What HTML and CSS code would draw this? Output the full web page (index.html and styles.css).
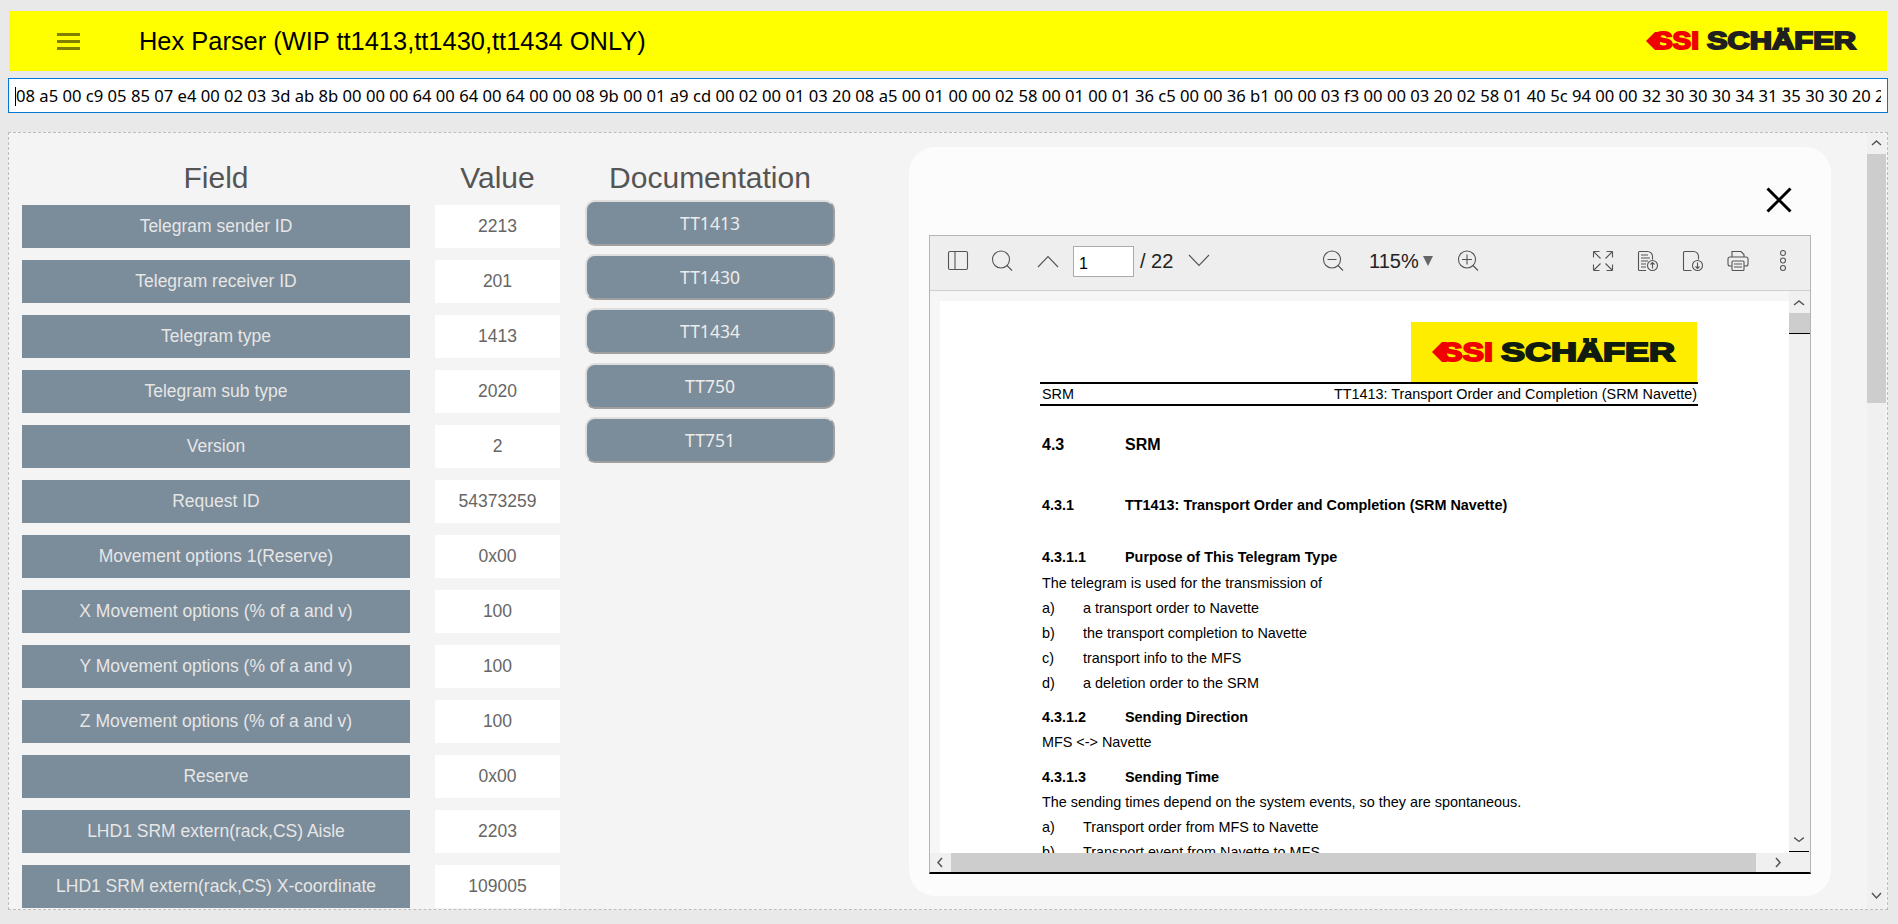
FILE: index.html
```html
<!DOCTYPE html>
<html lang="en">
<head>
<meta charset="utf-8">
<title>Hex Parser</title>
<link rel="stylesheet" href="styles.css">
</head>
<body>
<header class="topbar">
  <button class="menu" aria-label="Menu"><span></span><span></span><span></span></button>
  <h1 class="app-title">Hex Parser (WIP tt1413,tt1430,tt1434 ONLY)</h1>
  <svg class="logo logo-top" viewBox="0 0 211 18" aria-label="SSI Schäfer">
    <polygon class="logo-red" points="0,9 9,0 14,0 14,18 9,18"/>
    <text class="logo-ssi" x="8" y="17" textLength="45" lengthAdjust="spacingAndGlyphs" font-size="23">SSI</text>
    <text class="logo-name" x="61" y="17" textLength="149" lengthAdjust="spacingAndGlyphs" font-size="23">SCHÄFER</text>
  </svg>
</header>

<div class="hex-input"><div class="hex-text"><span class="caret"></span>08 a5 00 c9 05 85 07 e4 00 02 03 3d ab 8b 00 00 00 64 00 64 00 64 00 00 08 9b 00 01 a9 cd 00 02 00 01 03 20 08 a5 00 01 00 00 02 58 00 01 00 01 36 c5 00 00 36 b1 00 00 03 f3 00 00 03 20 02 58 01 40 5c 94 00 00 32 30 30 30 34 31 35 30 30 20 20</div></div>

<main class="workspace">
  <div class="content">
    <section class="col col-field">
      <h2 class="col-head">Field</h2>
      <div class="field">Telegram sender ID</div>
      <div class="field">Telegram receiver ID</div>
      <div class="field">Telegram type</div>
      <div class="field">Telegram sub type</div>
      <div class="field">Version</div>
      <div class="field">Request ID</div>
      <div class="field">Movement options 1(Reserve)</div>
      <div class="field">X Movement options (% of a and v)</div>
      <div class="field">Y Movement options (% of a and v)</div>
      <div class="field">Z Movement options (% of a and v)</div>
      <div class="field">Reserve</div>
      <div class="field">LHD1 SRM extern(rack,CS) Aisle</div>
      <div class="field">LHD1 SRM extern(rack,CS) X-coordinate</div>
    </section>
    <section class="col col-value">
      <h2 class="col-head">Value</h2>
      <div class="value">2213</div>
      <div class="value">201</div>
      <div class="value">1413</div>
      <div class="value">2020</div>
      <div class="value">2</div>
      <div class="value">54373259</div>
      <div class="value">0x00</div>
      <div class="value">100</div>
      <div class="value">100</div>
      <div class="value">100</div>
      <div class="value">0x00</div>
      <div class="value">2203</div>
      <div class="value">109005</div>
    </section>
    <section class="col col-doc">
      <h2 class="col-head col-head-doc">Documentation</h2>
      <button class="doc-btn">TT1413</button>
      <button class="doc-btn">TT1430</button>
      <button class="doc-btn">TT1434</button>
      <button class="doc-btn">TT750</button>
      <button class="doc-btn">TT751</button>
    </section>

    <section class="modal">
      <div class="modal-close" aria-label="Close">
        <svg width="26" height="26" viewBox="0 0 26 26"><path class="close-x" d="M1.500 1.500 24.500 24.500M24.500 1.500 1.500 24.500"/></svg>
      </div>
      <div class="viewer">
        <div class="toolbar">
          <svg class="ti" viewBox="0 0 22 22"><rect x="1.500" y="1.500" width="19" height="18" rx="1.500"/><path d="M8 1.500v18"/></svg>
          <svg class="ti gap-22" viewBox="0 0 22 22"><circle cx="10" cy="9.500" r="8.500"/><path d="M16 15.500l5 5"/></svg>
          <svg class="ti gap-24" viewBox="0 0 22 22"><path d="M1 17 11 6.500 21 17"/></svg>
          <div class="page-box">1</div>
          <span class="tb-text page-total">/ 22</span>
          <svg class="ti gap-14" viewBox="0 0 22 22"><path d="M1 5 11 15.500 21 5"/></svg>
          <svg class="ti zoom-out" viewBox="0 0 22 22"><circle cx="10" cy="9.500" r="8.500"/><path d="M16 15.500l5 5M5.500 9.500h9"/></svg>
          <span class="tb-text zoom-val">115%</span>
          <span class="zoom-caret"></span>
          <svg class="ti zoom-in" viewBox="0 0 22 22"><circle cx="10" cy="9.500" r="8.500"/><path d="M16 15.500l5 5M5 9.500h10M10 4.500v10"/></svg>
          <div class="tb-right">
            <svg class="ti" viewBox="0 0 22 22"><path d="M1.500 1.500l7 7M1.500 1.500v6M1.500 1.500h6M20.500 1.500l-7 7M20.500 1.500v6M20.500 1.500h-6M1.500 20.500l7-7M1.500 20.500v-6M1.500 20.500h6M20.500 20.500l-7-7M20.500 20.500v-6M20.500 20.500h-6"/></svg>
            <svg class="ti" viewBox="0 0 22 22"><path d="M9 20.500H2.500a1 1 0 0 1-1-1v-17a1 1 0 0 1 1-1h8a5 5 0 0 1 5 5v3"/><path d="M4 5h7M4 8h9M4 11h7M4 14h5M4 17h5M15.500 18.500v-6M13.500 14.500l2-2 2 2"/><circle cx="15.500" cy="15.500" r="5"/></svg>
            <svg class="ti" viewBox="0 0 22 22"><path d="M9.500 20.500h-7a1 1 0 0 1-1-1v-17a1 1 0 0 1 1-1h9a5 5 0 0 1 5 5v3"/><path d="M15.500 12.500v6M13.500 16.500l2 2 2-2"/><circle cx="15.500" cy="15.500" r="5"/></svg>
            <svg class="ti" viewBox="0 0 22 22"><path d="M5 7V1.500h9l3 3V7M5 16H3a2 2 0 0 1-2-2V9a2 2 0 0 1 2-2h16a2 2 0 0 1 2 2v5a2 2 0 0 1-2 2h-2"/><rect x="5" y="11" width="12" height="9.500" rx="1"/><path d="M7 14h8M7 17h8"/></svg>
            <svg class="ti" viewBox="0 0 22 22"><circle cx="11" cy="3" r="2.500"/><circle cx="11" cy="10.500" r="2.500"/><circle cx="11" cy="18" r="2.500"/></svg>
          </div>
        </div>
        <div class="pdf-body">
          <div class="pdf-left">
            <div class="pdf-scroll">
              <article class="pdf-page">
                <div class="pdf-logo">
                  <svg class="logo logo-pdf" viewBox="0 0 244 20" aria-label="SSI Schäfer">
                    <polygon class="logo-red" points="0,10 10,0 15,0 15,20 10,20"/>
                    <text class="logo-ssi" x="9" y="19" textLength="52" lengthAdjust="spacingAndGlyphs" font-size="25.500">SSI</text>
                    <text class="logo-name logo-name-pdf" x="69" y="19" textLength="174" lengthAdjust="spacingAndGlyphs" font-size="25.500">SCHÄFER</text>
                  </svg>
                </div>
                <div class="pdf-runner"><span>SRM</span><span>TT1413: Transport Order and Completion (SRM Navette)</span></div>
                <div class="l h1 m-26"><span class="num">4.3</span>SRM</div>
                <div class="l h2 m-36"><span class="num">4.3.1</span>TT1413: Transport Order and Completion (SRM Navette)</div>
                <div class="l h2 m-27"><span class="num">4.3.1.1</span>Purpose of This Telegram Type</div>
                <div class="l m-1">The telegram is used for the transmission of</div>
                <div class="l"><span class="mark">a)</span>a transport order to Navette</div>
                <div class="l"><span class="mark">b)</span>the transport completion to Navette</div>
                <div class="l"><span class="mark">c)</span>transport info to the MFS</div>
                <div class="l"><span class="mark">d)</span>a deletion order to the SRM</div>
                <div class="l h2 m-9"><span class="num">4.3.1.2</span>Sending Direction</div>
                <div class="l">MFS &lt;-&gt; Navette</div>
                <div class="l h2 m-10"><span class="num">4.3.1.3</span>Sending Time</div>
                <div class="l">The sending times depend on the system events, so they are spontaneous.</div>
                <div class="l"><span class="mark">a)</span>Transport order from MFS to Navette</div>
                <div class="l"><span class="mark">b)</span>Transport event from Navette to MFS</div>
              </article>
            </div>
            <div class="hbar">
              <svg class="arrow" width="21" height="19" viewBox="0 0 21 19"><path d="M12 5 8 9.500 12 14"/></svg>
              <div class="hthumb"></div>
              <svg class="arrow" width="33" height="19" viewBox="0 0 33 19"><path d="M20 5 24 9.500 20 14"/></svg>
            </div>
          </div>
          <div class="vbar">
            <svg class="arrow" width="20" height="22" viewBox="0 0 20 22"><path d="M5 14 10 10 15 14"/></svg>
            <div class="vthumb"></div>
            <div class="vbar-fill"></div>
            <svg class="arrow arrow-low" width="20" height="22" viewBox="0 0 20 22"><path d="M5 8 10 12 15 8"/></svg>
          </div>
        </div>
      </div>
    </section>
  </div>
  <aside class="main-bar">
    <svg class="arrow" width="19" height="21" viewBox="0 0 19 21"><path d="M5 12 9.500 8 14 12"/></svg>
    <div class="main-thumb"></div>
    <div class="vbar-fill"></div>
    <svg class="arrow" width="19" height="22" viewBox="0 0 19 22"><path d="M5 6 9.500 11 14 6"/></svg>
  </aside>
</main>
</body>
</html>
```
FILE: styles.css
```css
* { box-sizing: border-box; }
html, body { margin: 0; padding: 0; height: 100%; overflow: hidden; }
body {
  background: #e9e9e9;
  font-family: "Liberation Sans", Arial, sans-serif;
  padding-top: 11px;
  width: 1898px;
  height: 924px;
}

/* top bar */
.topbar {
  margin-left: 9px;
  width: 1878px;
  height: 60px;
  background: #ffff00;
  display: flex;
  align-items: center;
}
.menu {
  margin-left: 48px;
  width: 23px;
  height: 17px;
  padding: 0;
  border: 0;
  background: none;
  display: flex;
  flex-direction: column;
  justify-content: space-between;
}
.menu span { display: block; height: 3px; width: 100%; background: #7f7f00; }
.app-title {
  margin: 0 0 0 59px;
  font-size: 25.450px;
  font-weight: 400;
  color: #000;
  flex: 1;
}
.logo { display: block; overflow: visible; }
.logo-top { width: 211px; height: 18px; margin-right: 30px; }
.logo-red { fill: #f00000; }
.logo-ssi {
  font-family: "Liberation Sans", sans-serif;
  font-weight: 700;
  fill: #f00000;
  stroke: #f00000;
  stroke-width: 1.800px;
}
.logo-name {
  font-family: "Liberation Sans", sans-serif;
  font-weight: 700;
  fill: #1f1f1f;
  stroke: #1f1f1f;
  stroke-width: 1.800px;
}
.logo-name-pdf { fill: #101c10; stroke: #101c10; }

/* hex field */
.hex-input {
  margin: 7px 0 0 8px;
  width: 1880px;
  height: 35px;
  background: #fff;
  border: 1px solid #0078d7;
  padding: 0 6px;
  font-family: "Noto Sans", sans-serif;
  font-size: 16.620px;
  line-height: 33px;
  color: #000;
}
.hex-text { white-space: pre; overflow: hidden; height: 33px; }
.caret {
  display: inline-block;
  width: 1px;
  height: 19px;
  background: #000;
  vertical-align: -4px;
}

/* workspace */
.workspace {
  margin: 19px 0 0 8px;
  width: 1880px;
  height: 778px;
  background: #f4f4f4;
  border: 1px dashed #bdbdbd;
  display: flex;
  overflow: hidden;
}
.content {
  flex: 1;
  min-width: 0;
  padding: 14px 0 0 13px;
  display: flex;
  align-items: flex-start;
  overflow: hidden;
}
.col { display: flex; flex-direction: column; }
.col-field { width: 388px; gap: 12px; }
.col-value { width: 125px; margin-left: 25px; gap: 12px; }
.col-doc { width: 250px; margin-left: 25px; gap: 8.200px; }
.col-head {
  margin: 0 0 -12px;
  height: 58px;
  font-size: 30px;
  line-height: 62px;
  font-weight: 400;
  color: #555;
  text-align: center;
  white-space: nowrap;
}
.col-head-doc { height: 53px; margin-bottom: -8.200px; }
.field, .value {
  height: 43px;
  flex: none;
  display: flex;
  align-items: center;
  justify-content: center;
  font-size: 17.500px;
  white-space: nowrap;
}
.field { background: #7b8c9a; color: #e6e6e6; }
.value { background: #fff; color: #666; }
.doc-btn {
  height: 46px;
  flex: none;
  background: #7b8c9a;
  color: #ececec;
  border: 2px solid;
  border-color: #dedede #a0a0a0 #a0a0a0 #dedede;
  border-radius: 10px;
  font-family: "Noto Sans", sans-serif;
  font-size: 17.500px;
  padding: 0;
}

/* modal */
.modal {
  width: 922px;
  height: 749px;
  margin-left: 74px;
  flex: none;
  background: #fcfcfc;
  border-radius: 26px;
  padding: 40px 20px 22px;
  display: flex;
  flex-direction: column;
}
.modal-close {
  height: 48px;
  display: flex;
  justify-content: flex-end;
  padding-right: 19px;
}
.close-x { fill: none; stroke: #000; stroke-width: 3; }
.viewer {
  width: 882px;
  height: 639px;
  border: 1px solid #b5b5b5;
  border-bottom: 2px solid #000;
  display: flex;
  flex-direction: column;
}
.toolbar {
  height: 55px;
  flex: none;
  background: #eeeeee;
  border-bottom: 1px solid #cfcfcf;
  display: flex;
  align-items: center;
  padding: 0 16px 4px 17px;
}
.ti {
  width: 22px;
  height: 22px;
  flex: none;
  fill: none;
  stroke: #555;
  stroke-width: 1.100;
}
.gap-22 { margin-left: 22px; }
.gap-24 { margin-left: 24px; }
.gap-14 { margin-left: 14px; }
.page-box {
  margin-left: 14px;
  width: 61px;
  height: 31px;
  background: #fff;
  border: 1px solid #ababab;
  font-size: 16px;
  line-height: 34px;
  padding-left: 5px;
  color: #000;
}
.tb-text { font-size: 20px; color: #222; white-space: nowrap; }
.page-total { margin-left: 6px; width: 34px; }
.zoom-out { margin-left: 112px; }
.zoom-val { margin-left: 25px; width: 54px; }
.zoom-caret {
  width: 0;
  height: 0;
  border-left: 5px solid transparent;
  border-right: 5px solid transparent;
  border-top: 10px solid #666;
}
.zoom-in { margin-left: 24px; }
.tb-right { margin-left: auto; display: flex; gap: 23px; }

/* pdf body */
.pdf-body { flex: 1; min-height: 0; display: flex; }
.pdf-left { flex: 1; min-width: 0; display: flex; flex-direction: column; }
.pdf-scroll {
  flex: 1;
  min-height: 0;
  overflow: hidden;
  background: #f6f6f6;
  padding: 10px 0 0 10px;
}
.pdf-page {
  background: #fff;
  padding: 21px 0 0 102px;
  color: #000;
  font-size: 14.400px;
  height: 640px;
}
.pdf-logo {
  margin-left: 369px;
  width: 286px;
  height: 60px;
  background: #ffed00;
  display: flex;
  align-items: center;
  padding-left: 21px;
}
.logo-pdf { width: 244px; height: 20px; }
.pdf-runner {
  margin-left: -2px;
  width: 658px;
  height: 24px;
  border-top: 2px solid #000;
  border-bottom: 2px solid #000;
  display: flex;
  justify-content: space-between;
  align-items: center;
  padding: 0 1px 0 2px;
  white-space: nowrap;
}
.l { height: 25px; line-height: 25px; white-space: nowrap; display: flex; }
.h1 { font-size: 16px; font-weight: 700; }
.h2 { font-size: 14.400px; font-weight: 700; }
.num { width: 83px; flex: none; }
.mark { width: 41px; flex: none; }
.m-1 { margin-top: 1px; }
.m-9 { margin-top: 9px; }
.m-10 { margin-top: 10px; }
.m-26 { margin-top: 26px; }
.m-27 { margin-top: 27px; }
.m-36 { margin-top: 36px; }
.hbar { height: 19px; flex: none; background: #f0f0f0; display: flex; }
.hthumb { flex: 1; background: #cdcdcd; }
.arrow { display: block; flex: none; fill: none; stroke: #555; stroke-width: 1.500; }
.vbar {
  width: 21px;
  flex: none;
  background: #f0f0f0;
  display: flex;
  flex-direction: column;
  padding-bottom: 20px;
}
.vthumb { height: 21px; flex: none; background: #cdcdcd; border-bottom: 1px solid #000; }
.vbar-fill { flex: 1; }
.arrow-low { border-bottom: 1px solid #000; }
.main-bar {
  width: 19px;
  margin-right: 1px;
  flex: none;
  background: #f0f0f0;
  display: flex;
  flex-direction: column;
}
.main-thumb { height: 249px; flex: none; background: #cdcdcd; }
```
